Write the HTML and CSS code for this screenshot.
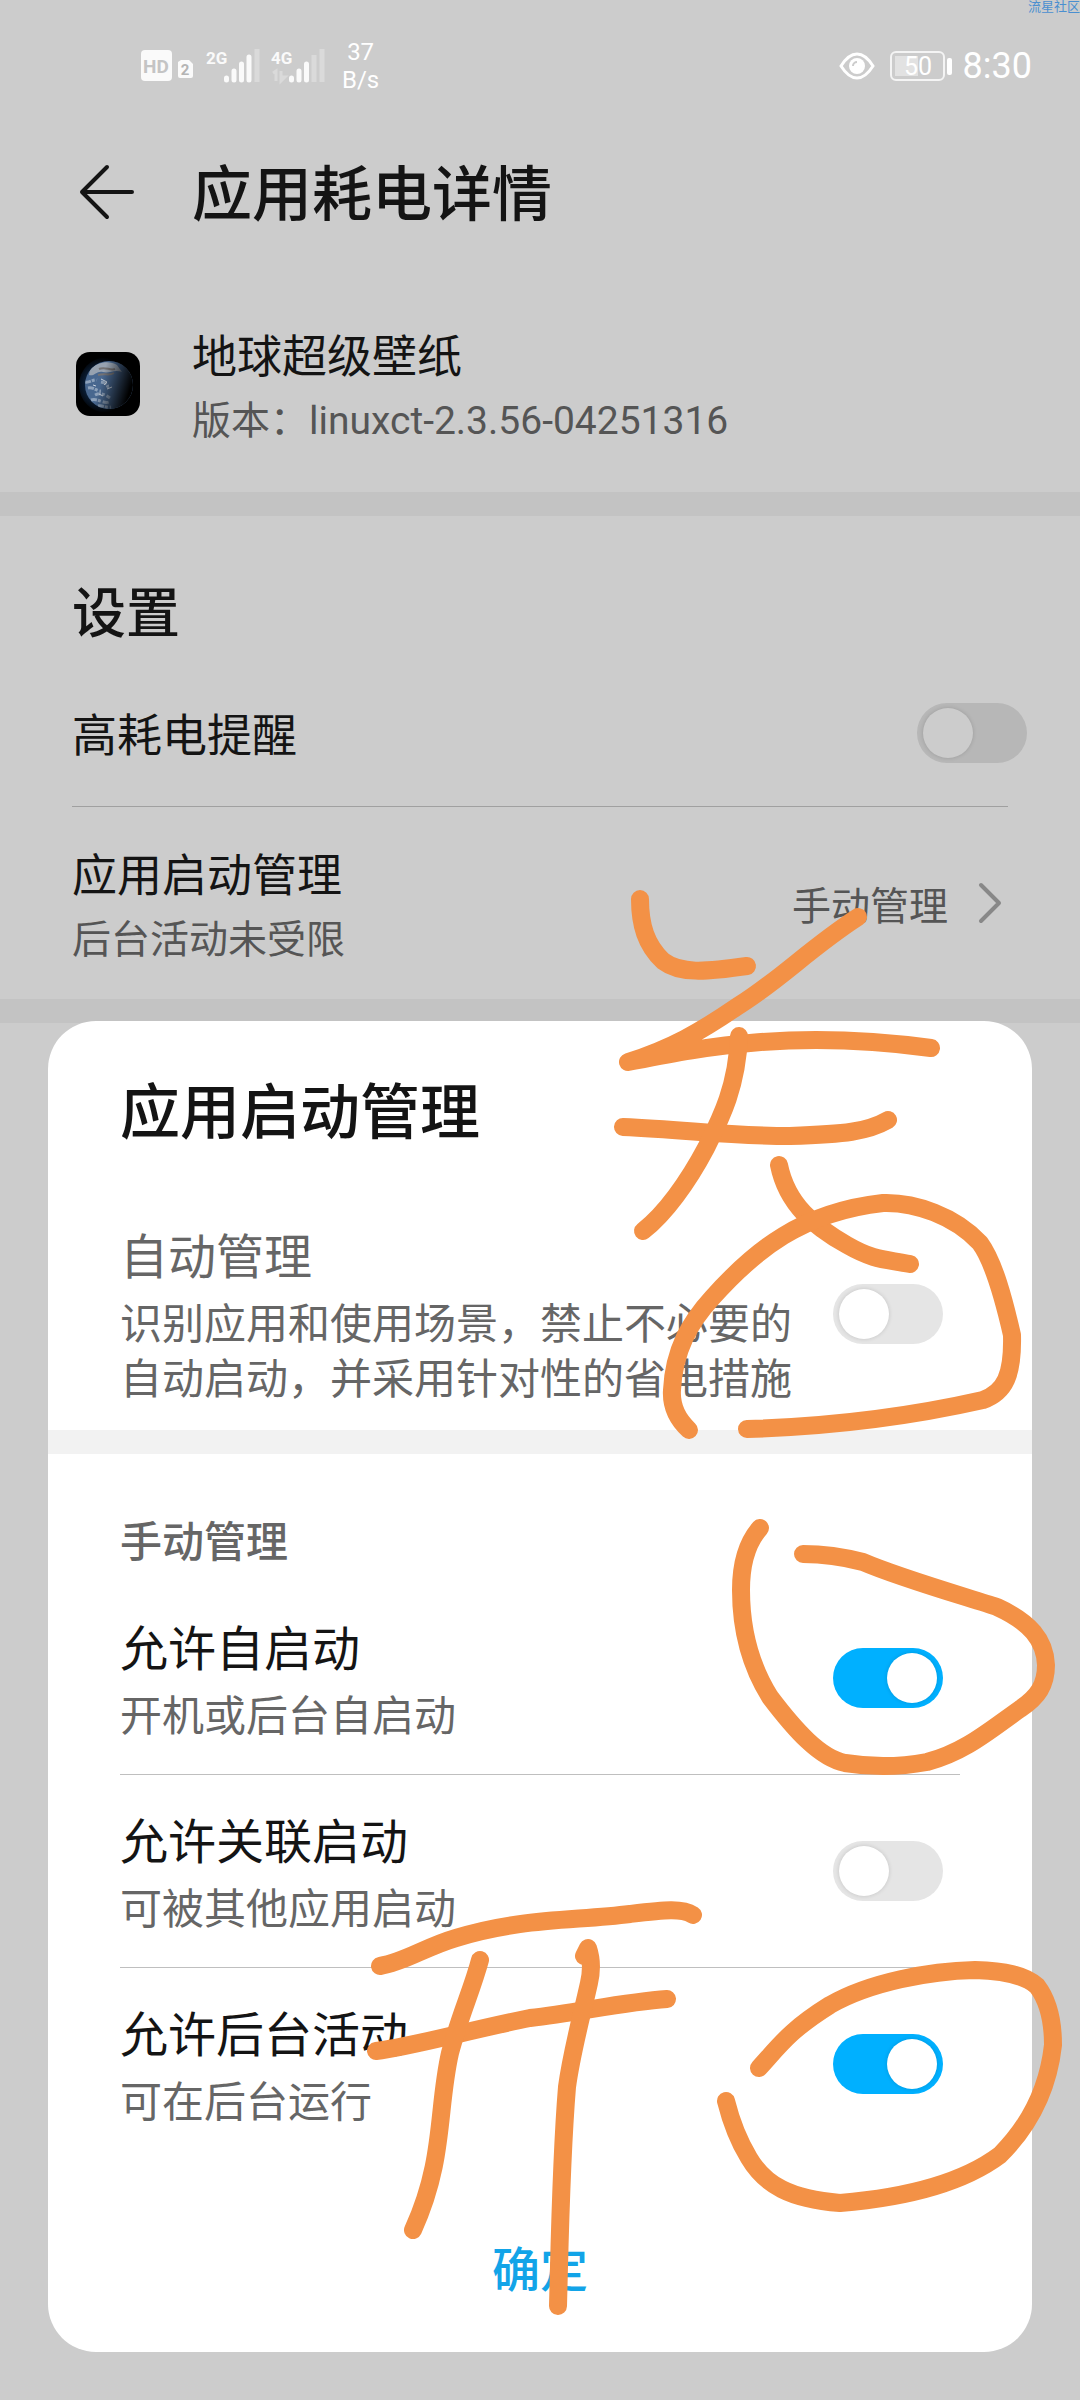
FILE: index.html
```html
<!DOCTYPE html>
<html lang="zh-CN">
<head>
    <meta charset="UTF-8">
    <meta name="viewport" content="width=device-width, initial-scale=1.0">
    <title>应用耗电详情</title>
    <link rel="stylesheet" href="styles.css">
</head>
<body>
    <div class="watermark">流星社区</div>

    <div class="status-bar">
        <div class="status-left">
            <svg class="hd" width="52" height="32" viewBox="0 0 52 32">
                <rect width="31" height="31" rx="4" fill="#fafafa"/>
                <text x="15" y="23" text-anchor="middle" font-size="19" font-weight="700" fill="#c4c4c4">HD</text>
                <path d="M40 10h8l4 4v12a2 2 0 0 1-2 2H39a2 2 0 0 1-2-2V12z" fill="#fafafa"/>
                <text x="44" y="25" text-anchor="middle" font-size="15" font-weight="700" fill="#b4b4b4">2</text>
            </svg>
            <svg class="signal" width="54" height="40" viewBox="0 -3 54 40">
                <text x="0" y="15" font-size="17" font-weight="700" fill="#fafafa">2G</text>
                <path d="M20.500 31v-2M28 31v-9M35.500 31v-16M43 31v-23" stroke="#fafafa" stroke-width="5" stroke-linecap="round"/>
                <path d="M51 33V0" stroke="#dadada" stroke-width="5"/>
            </svg>
            <svg class="signal" width="54" height="40" viewBox="0 -3 54 40">
                <text x="0" y="15" font-size="17" font-weight="700" fill="#fafafa">4G</text>
                <path d="M2 24l3-2v10M10 22v10l4-4h-4" stroke="#dadada" stroke-width="3" fill="none"/>
                <path d="M20.500 31v-2M28 31v-9M35.500 31v-16" stroke="#fafafa" stroke-width="5" stroke-linecap="round"/>
                <path d="M43 33V6M51 33V0" stroke="#dadada" stroke-width="5"/>
            </svg>
            <div class="speed">37<br>B/s</div>
        </div>
        <div class="status-right">
            <svg width="36" height="28" viewBox="0 0 36 28">
                <path d="M2 14C7 6 12 2 18 2s11 4 16 12c-5 8-10 12-16 12S7 22 2 14z" fill="none" stroke="#fff" stroke-width="3"/>
                <circle cx="18" cy="14" r="8" fill="#fff"/>
                <path d="M14 14a4 4 0 0 1 4-4" fill="none" stroke="#ccc" stroke-width="2"/>
            </svg>
            <svg width="64" height="30" viewBox="0 0 64 30">
                <rect x="1" y="1" width="53" height="28" rx="5" fill="none" stroke="#f4f4f4" stroke-width="2"/>
                <rect x="5" y="5" width="23" height="20" fill="#e2e2e2"/>
                <rect x="57" y="7" width="5" height="17" rx="2" fill="#fff"/>
                <text x="28" y="24" text-anchor="middle" font-size="25" fill="#fff">50</text>
            </svg>
            <span class="time">8:30</span>
        </div>
    </div>

    <header class="header">
        <a href="#" class="back" aria-label="返回">
            <svg width="56" height="64" viewBox="0 0 56 64">
                <path d="M29 3L4 28l25 25M4 28h50" fill="none" stroke="#141414" stroke-width="4" stroke-linecap="round" stroke-linejoin="round"/>
            </svg>
        </a>
        <h1>应用耗电详情</h1>
    </header>

    <section class="app">
        <svg class="app-icon" width="64" height="64" viewBox="0 0 64 64">
            <defs>
                <radialGradient id="glow" cx="0.4" cy="0.5" r="0.5">
                    <stop offset="0.5" stop-color="#0d2544"/>
                    <stop offset="1" stop-color="#000"/>
                </radialGradient>
                <linearGradient id="shade" x1="0" y1="0.3" x2="1" y2="0.6">
                    <stop offset="0.4" stop-color="#000" stop-opacity="0"/>
                    <stop offset="0.85" stop-color="#000"/>
                </linearGradient>
                <clipPath id="globe"><circle cx="33" cy="33" r="24"/></clipPath>
            </defs>
            <rect width="64" height="64" rx="14" fill="#000"/>
            <circle cx="31" cy="33" r="28" fill="url(#glow)"/>
            <g clip-path="url(#globe)">
                <rect width="64" height="64" fill="#48678f"/>
                <path d="M14 17c8-7 19-9 27-4l5 7c-8-3-13 2-19 0s-9 5-14 3z" fill="#97a2b0"/>
                <path d="M23 17c6-3 11 2 16 0M22 23c7-2 11 1 16-2" stroke="#747273" stroke-width="2" fill="none"/>
                <path d="M9 30c5 1 8-3 12-2M25 30c5 1 8 3 6 6M12 36c6-1 8 3 13 3M19 43c6-3 11 0 15 3M15 48c7-2 12 4 18 2M22 54c5-1 8 2 13 1" stroke="#9fb0c5" stroke-width="3" stroke-dasharray="6 1 3 2" fill="none" opacity="0.8"/>
                <path d="M25 27l6 3-3 3M31 37l5-2M23 42l4 2M17 33l3 1" stroke="#ccd6e2" stroke-width="1" fill="none"/>
                <rect width="64" height="64" fill="url(#shade)"/>
            </g>
        </svg>
        <div>
            <div class="name">地球超级壁纸</div>
            <div class="desc">版本：linuxct-2.3.56-04251316</div>
        </div>
    </section>

    <div class="band"></div>

    <section class="settings">
        <h2>设置</h2>
        <div class="row">
            <label class="name" for="power">高耗电提醒</label>
            <input type="checkbox" class="switch" id="power">
        </div>
        <a href="#" class="row launch">
            <div>
                <div class="name">应用启动管理</div>
                <div class="desc">后台活动未受限</div>
            </div>
            <div class="value">
                手动管理
                <svg width="30" height="42" viewBox="0 0 30 42">
                    <path d="M3 3l18 18L3 39" fill="none" stroke="#888" stroke-width="4" stroke-linecap="round" stroke-linejoin="round"/>
                </svg>
            </div>
        </a>
    </section>

    <div class="band"></div>

    <div class="dialog" role="dialog">
        <h1>应用启动管理</h1>
        <div class="item auto">
            <label class="item-text" for="auto">
                <span class="item-name">自动管理</span>
                <span class="item-desc">识别应用和使用场景，禁止不必要的自动启动，并采用针对性的省电措施</span>
            </label>
            <input type="checkbox" class="switch" id="auto">
        </div>
        <div class="dialog-band"></div>
        <h3>手动管理</h3>
        <div class="item">
            <label class="item-text" for="self">
                <span class="item-name">允许自启动</span>
                <span class="item-desc">开机或后台自启动</span>
            </label>
            <input type="checkbox" class="switch" id="self" checked>
        </div>
        <div class="item">
            <label class="item-text" for="linked">
                <span class="item-name">允许关联启动</span>
                <span class="item-desc">可被其他应用启动</span>
            </label>
            <input type="checkbox" class="switch" id="linked">
        </div>
        <div class="item">
            <label class="item-text" for="background">
                <span class="item-name">允许后台活动</span>
                <span class="item-desc">可在后台运行</span>
            </label>
            <input type="checkbox" class="switch" id="background" checked>
        </div>
        <button type="button" class="ok">确定</button>
    </div>

    <!-- pen marks -->
    <svg class="marks" width="1080" height="2400" viewBox="0 0 1080 2400">
        <path d="M640 899C640 925 646 945 663 961C680 974 705 972 747 966"/>
        <path d="M858 917C810 948 780 980 738 1006C700 1032 670 1049 628 1062C700 1048 790 1029 931 1048"/>
        <path d="M623 1127C690 1130 730 1136 790 1136C845 1134 867 1132 888 1120"/>
        <path d="M739 1036C737 1088 720 1120 706 1148C688 1182 665 1214 643 1231"/>
        <path d="M779 1165C787 1205 815 1227 847 1245C875 1261 885 1259 910 1264"/>
        <path d="M689 1430C676 1418 671 1405 672 1390C674 1350 690 1322 712 1298C755 1250 802 1212 883 1203C915 1202 955 1216 980 1243C994 1262 1004 1300 1012 1335C1013 1375 1005 1392 983 1400C930 1412 850 1426 747 1429"/>
        <path d="M760 1528C745 1545 741 1570 741 1590C741 1630 750 1665 770 1697C795 1730 820 1758 845 1763C870 1767 900 1767 927 1762C965 1752 990 1730 1020 1709C1038 1697 1046 1685 1046 1665C1045 1640 1030 1622 997 1607C970 1598 900 1578 863 1562C840 1556 820 1554 803 1554"/>
        <path d="M380 1966C405 1962 425 1947 456 1938C520 1918 575 1921 630 1914C665 1910 682 1908 693 1915"/>
        <path d="M376 2051C410 2047 470 2030 530 2018C580 2012 625 2002 667 1999"/>
        <path d="M480 1960C472 1990 460 2015 450 2053C437 2110 445 2160 413 2230"/>
        <path d="M584 1956L588 1948C592 1960 592 1970 589 1983C582 2015 572 2050 567 2087C561 2160 560 2230 558 2306"/>
        <path d="M759 2068C780 2045 790 2030 830 2005C870 1982 930 1971 975 1970C1005 1971 1025 1975 1037 1986C1050 2003 1053 2025 1053 2045C1048 2090 1030 2125 1000 2155C960 2185 900 2198 840 2203C790 2199 765 2185 749 2158C738 2140 732 2125 726 2101"/>
    </svg>
</body>
</html>
```

FILE: styles.css
```css
* {
    box-sizing: border-box;
}

body {
    font-family: Roboto, "Noto Sans CJK SC", sans-serif;
    margin: 0;
    background-color: #ccc;
    color: #141414;
    position: relative;
    min-height: 100vh;
    overflow-x: hidden;
}

h1, h2, h3 {
    margin: 0;
    font-weight: 500;
}

h1 {
    font-size: 60px;
    line-height: 80px;
}

a {
    color: inherit;
    text-decoration: none;
}

svg {
    display: block;
}

.watermark {
    position: absolute;
    top: 0;
    right: 0;
    font-size: 13px;
    line-height: 14px;
    color: #4a8fd0;
}

/* status bar */
.status-bar {
    height: 132px;
    padding: 0 48px 0 141px;
    display: flex;
    justify-content: space-between;
    align-items: center;
    color: #fff;
}

.status-left, .status-right {
    display: flex;
    align-items: center;
}

.hd {
    margin-right: 13px;
}

.signal {
    margin-right: 11px;
    overflow: visible;
}

.speed {
    margin-left: 6px;
    font-size: 24px;
    line-height: 28px;
    text-align: center;
}

.status-right {
    gap: 15px;
}

.time {
    font-size: 36px;
    line-height: 40px;
    margin-left: -6px;
}

/* page */
.header {
    height: 128px;
    padding: 0 78px;
    display: flex;
    align-items: center;
    gap: 58px;
}

.app {
    display: flex;
    gap: 52px;
    padding: 68px 76px 44px;
}

.app-icon {
    margin-top: 24px;
}

.name {
    font-size: 45px;
    line-height: 60px;
}

.desc {
    margin-top: 7px;
    padding-bottom: 1px;
    font-size: 39px;
    line-height: 52px;
    color: #555;
}

.band {
    height: 24px;
    background-color: #c3c3c3;
}

.settings {
    padding: 63px 72px 0;
}

.settings h2 {
    font-size: 54px;
    line-height: 72px;
    margin-bottom: 9px;
}

.row {
    height: 147px;
    display: flex;
    justify-content: space-between;
    align-items: center;
    border-bottom: 1px solid #a0a0a0;
}

.row .name {
    padding-top: 8px;
}

.row .switch {
    margin-right: -19px;
    background-color: #b7b7b7;
}

.row .switch::before {
    background-color: #ccc;
}

.launch {
    height: 192px;
    border-bottom: none;
}

.value {
    display: flex;
    align-items: center;
    gap: 30px;
    font-size: 39px;
    color: #555;
}

.switch {
    appearance: none;
    flex: none;
    margin: 0;
    padding: 5px 6px;
    width: 110px;
    height: 60px;
    border-radius: 30px;
    background-color: #e5e5e5;
    display: flex;
}

.switch::before {
    content: "";
    width: 50px;
    height: 50px;
    border-radius: 50%;
    background-color: #fff;
    box-shadow: 0 0 4px rgba(0, 0, 0, 0.15);
}

.switch:checked {
    background-color: #00b0ff;
    justify-content: flex-end;
}

/* dialog */
.dialog {
    position: absolute;
    left: 48px;
    right: 48px;
    bottom: 48px;
    padding: 53px 0 38px;
    border-radius: 48px;
    background-color: #fff;
}

.dialog h1, .dialog h3 {
    padding: 0 72px;
}

.dialog h3 {
    margin: 61px 0 12px;
    font-size: 42px;
    line-height: 55px;
    color: #666;
}

.item {
    margin: 0 72px;
    height: 193px;
    display: flex;
    justify-content: space-between;
    align-items: center;
    border-bottom: 1px solid #bfbfbf;
}

.item .switch {
    margin-right: 17px;
}

.item-text {
    width: 680px;
    padding-top: 7px;
}

.item-name, .item-desc {
    display: block;
}

.item-name {
    font-size: 48px;
    line-height: 64px;
}

.item-desc {
    margin-top: 7px;
    padding-bottom: 1px;
    font-size: 42px;
    line-height: 55px;
    color: #666;
}

.auto {
    height: auto;
    padding: 65px 0 22px;
    border-bottom: none;
}

.auto .item-name {
    color: #666;
}

.dialog-band {
    height: 24px;
    background-color: #f2f2f2;
}

.item:nth-last-child(2) {
    height: 192px;
    border-bottom: none;
}

.ok {
    display: block;
    width: calc(100% - 144px);
    height: 96px;
    margin: 58px 72px 0;
    padding: 0;
    border: none;
    background: none;
    font-family: inherit;
    font-size: 48px;
    font-weight: 500;
    color: #12a4e8;
    cursor: pointer;
}

/* pen marks drawn over everything */
.marks {
    position: absolute;
    top: 0;
    left: 0;
    pointer-events: none;
    fill: none;
    stroke: #f39146;
    stroke-width: 18px;
    stroke-linecap: round;
    stroke-linejoin: round;
}
```
